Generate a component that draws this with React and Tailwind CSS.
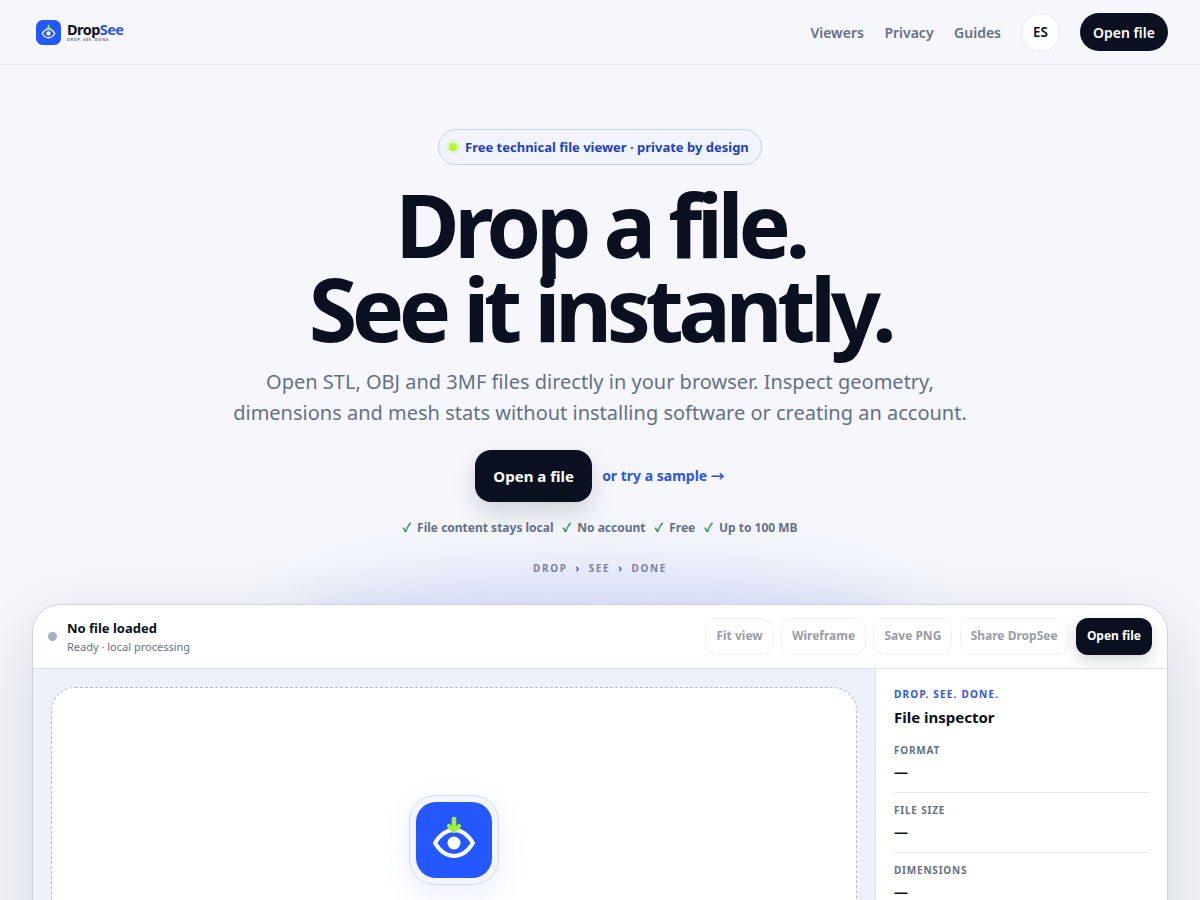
const FONT = "font-['Noto_Sans','Noto_Sans_CJK_SC','Liberation_Sans',sans-serif]";

function Logo({ className }) {
  return (
    <svg viewBox="0 0 76 76" className={className}>
      <rect width="76" height="76" rx="20" fill="#2557ff" />
      <path d="M19 41C24.500 32 31 28 38 28s13.500 4 19 13C51.500 50 45 54 38 54s-13.500-4-19-13Z" fill="none" stroke="#fff" strokeWidth="4" strokeLinejoin="round" />
      <circle cx="38" cy="41" r="6.500" fill="#fff" />
      <path d="M38 17v11" stroke="#a3f03c" strokeWidth="4.600" strokeLinecap="round" />
      <path d="M33 24 38 29l5-5" fill="none" stroke="#a3f03c" strokeWidth="4.200" strokeLinecap="round" strokeLinejoin="round" />
    </svg>
  );
}

function Tool({ children }) {
  return (
    <span className="flex h-[37px] items-center rounded-[12px] border border-[#eef0f5] bg-white px-[10px] pb-[2px] text-[12px] font-bold text-[#9a9ca5]">
      {children}
    </span>
  );
}

function Field({ label, last }) {
  return (
    <div className={last ? "pb-3" : "mb-[9px] h-[51px] border-b border-[#e6e9f0]"}>
      <div className="text-[10px] leading-[16px] font-bold tracking-[0.08em] text-[#667085]">{label}</div>
      <div className="mt-[2px] text-[14px] leading-[24px] font-bold text-[#0a1020]">—</div>
    </div>
  );
}

function Check({ children }) {
  return (
    <span className="flex items-center gap-[6px]">
      <span className="text-[#16804f]">✓</span>
      {children}
    </span>
  );
}

export default function App() {
  return (
    <div className={`${FONT} relative h-[900px] overflow-hidden bg-[#f5f7fc] text-[#0a1020]`}>
      <div className="pointer-events-none absolute top-[565px] left-[290px] h-[130px] w-[620px] rounded-[50%] bg-[#dde4fb] blur-[30px]" />

      <header className="relative flex h-[65px] items-center justify-between border-b border-[#e5e8ef] pr-[32px] pl-[36px]">
        <div className="flex items-center gap-[6px]">
          <Logo className="h-[25px] w-[25px]" />
          <div className="flex flex-col">
            <div className="text-[14.500px] leading-[15px] font-bold tracking-[-0.04em]">
              <span className="text-[#0a1020]">Drop</span><span className="text-[#2f55e0]">See</span>
            </div>
            <div className="text-[4px] leading-[5px] font-bold tracking-[0.14em] text-[#667085]">DROP. SEE. DONE.</div>
          </div>
        </div>
        <nav className="flex items-center">
          <div className="flex gap-[20.500px] text-[14px] font-semibold text-[#667085]">
            <span>Viewers</span><span>Privacy</span><span>Guides</span>
          </div>
          <span className="ml-[20px] flex h-[39px] w-[39px] items-center justify-center rounded-full border border-[#e5e8ef] bg-white text-[13.500px] font-semibold text-[#0a1020]">ES</span>
          <span className="ml-[20px] flex h-[38px] w-[88px] items-center justify-center rounded-full bg-[#0a1020] text-[14px] font-semibold text-white">Open file</span>
        </nav>
      </header>

      <main className="relative flex flex-col items-center">
        <div className="mt-[64px] flex h-[36px] w-[324px] items-center gap-[8px] rounded-full border border-[#c5cfec] bg-[#f1f4fe] pl-[10px] text-[13px] font-bold text-[#2140bf]">
          <span className="h-[8px] w-[8px] rounded-full bg-[#b5f534] shadow-[0_0_0_3px_rgba(181,245,52,0.25)]" />
          <span className="pt-[2px]">Free technical file viewer · private by design</span>
        </div>

        <h1 className="mt-[17px] text-center text-[88px] leading-[84px] font-bold tracking-[-0.062em] text-[#0a1020]">
          Drop a file.<br />See it instantly.
        </h1>

        <p className="mt-[16px] text-center text-[20px] leading-[31px] text-[#667085]">
          Open STL, OBJ and 3MF files directly in your browser. Inspect geometry,<br />
          dimensions and mesh stats without installing software or creating an account.
        </p>

        <div className="mt-[22px] flex items-center gap-[10px]">
          <span className="flex h-[52px] w-[117px] items-center justify-center rounded-[16px] bg-[#0a1020] text-[15px] font-bold text-white shadow-[0_10px_24px_rgba(10,16,32,0.16)]">Open a file</span>
          <span className="pb-[2px] text-[14px] font-bold text-[#2f55e0]">or try a sample →</span>
        </div>

        <div className="mt-[17px] flex h-[18px] items-center gap-[9px] text-[12px] font-bold text-[#667085]">
          <Check>File content stays local</Check>
          <Check>No account</Check>
          <Check>Free</Check>
          <Check>Up to 100 MB</Check>
        </div>

        <div className="mt-[24px] flex h-[14px] items-center gap-[8px] text-[10px] font-bold tracking-[0.16em] text-[#7d869b]">
          <span>DROP</span><span className="text-[#2f55e0]">›</span><span>SEE</span><span className="text-[#2f55e0]">›</span><span>DONE</span>
        </div>

        <section className="mt-[29px] w-[1136px] overflow-hidden rounded-t-[28px] border border-[#ccd3e3] bg-white shadow-[0_24px_80px_rgba(10,16,32,0.14)]">
          <div className="flex h-[64px] items-center justify-between border-b border-[#dfe3ee] px-[15px]">
            <div className="flex items-center gap-[10px]">
              <span className="h-[9px] w-[9px] rounded-full bg-[#a8b0bf]" />
              <div>
                <div className="text-[13px] leading-[18px] font-bold text-[#0a1020]">No file loaded</div>
                <div className="mt-[2px] text-[11px] leading-[16px] text-[#667085]">Ready · local processing</div>
              </div>
            </div>
            <div className="flex items-center gap-[7.300px]">
              <Tool>Fit view</Tool>
              <Tool>Wireframe</Tool>
              <Tool>Save PNG</Tool>
              <Tool>Share DropSee</Tool>
              <span className="flex h-[37px] items-center rounded-[12px] bg-[#0a1020] px-[11px] pb-[2px] text-[12px] font-bold text-white shadow-[0_6px_16px_rgba(10,16,32,0.16)]">Open file</span>
            </div>
          </div>
          <div className="flex h-[400px]">
            <div className="flex-1 bg-[#edf1fa] p-[18px]">
              <div className="flex h-[500px] w-full flex-col items-center rounded-[24px] border border-dashed border-[#b4b9c6] bg-white pt-[107px]">
                <div className="rounded-[26px] border border-[#d5daf0] bg-[#f2f5fd] p-[6px] shadow-[0_10px_30px_rgba(37,87,255,0.10)]">
                  <Logo className="h-[76px] w-[76px]" />
                </div>
              </div>
            </div>
            <aside className="w-[292px] border-l border-[#dfe3ee] bg-white px-[18px] pt-[18px]">
              <div className="text-[10px] leading-[14px] font-bold tracking-[0.12em] text-[#2f55e0]">DROP. SEE. DONE.</div>
              <div className="mt-[5px] text-[15px] leading-[22px] font-bold text-[#0a1020]">File inspector</div>
              <div className="mt-[14px]">
                <Field label="FORMAT" />
                <Field label="FILE SIZE" />
                <Field label="DIMENSIONS" last />
              </div>
            </aside>
          </div>
        </section>
      </main>
    </div>
  );
}
